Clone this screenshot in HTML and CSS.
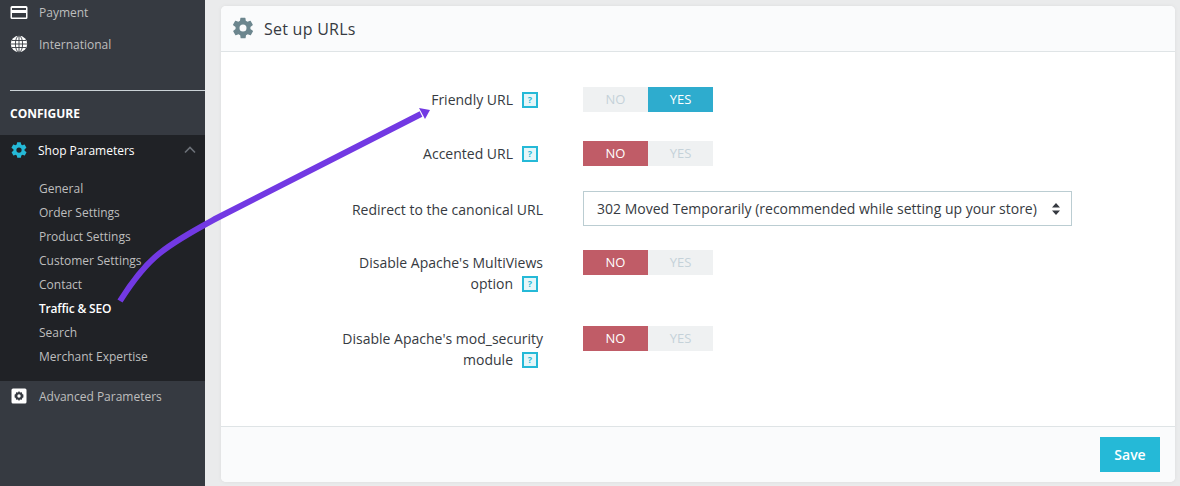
FILE: index.html
```html
<!DOCTYPE html>
<html lang="en">
<head>
<meta charset="utf-8">
<title>Set up URLs</title>
<link rel="stylesheet" href="styles.css">
</head>
<body>
<div class="app">
  <aside class="sidebar">
    <a class="nav-item"><svg class="nav-icon" viewBox="0 0 18 18"><path fill="#fff" d="M2 3h14a1.500 1.500 0 0 1 1.500 1.500v10A1.500 1.500 0 0 1 16 16H2a1.500 1.500 0 0 1-1.500-1.500v-10A1.500 1.500 0 0 1 2 3zm0 2v2h14V5zm0 5v4.500h14V10z"/></svg><span>Payment</span></a>
    <a class="nav-item"><svg class="nav-icon" viewBox="0 0 18 18"><circle cx="9" cy="9" r="8.200" fill="#fff"/><g fill="none" stroke="#363a41" stroke-width=".9"><ellipse cx="9" cy="9" rx="3.600" ry="8.200"/><path d="M9 .8v16.400M.8 9h16.400M2 5.500h14M2 12.500h14"/></g></svg><span>International</span></a>
    <div class="nav-rule"></div>
    <div class="nav-heading">CONFIGURE</div>
    <div class="nav-group">
      <a class="nav-parent"><svg class="nav-icon" viewBox="0 0 24 24"><path fill="#25b9d7" d="M19.400 13a7.600 7.600 0 0 0 0-2l2.200-1.700a.5.500 0 0 0 .1-.7l-2-3.600a.5.500 0 0 0-.6-.2l-2.600 1a7.500 7.500 0 0 0-1.700-1l-.4-2.700a.5.500 0 0 0-.5-.4h-4a.5.500 0 0 0-.5.400l-.4 2.700a7.500 7.500 0 0 0-1.700 1l-2.600-1a.5.500 0 0 0-.6.200l-2 3.600a.5.500 0 0 0 .1.700L4.600 11a7.600 7.600 0 0 0 0 2l-2.200 1.700a.5.500 0 0 0-.1.700l2 3.600a.5.500 0 0 0 .6.200l2.600-1a7.500 7.500 0 0 0 1.700 1l.4 2.700a.5.500 0 0 0 .5.400h4a.5.500 0 0 0 .5-.4l.4-2.700a7.500 7.500 0 0 0 1.700-1l2.600 1a.5.500 0 0 0 .6-.2l2-3.600a.5.500 0 0 0-.1-.7zM12 15.500a3.500 3.500 0 1 1 0-7 3.500 3.500 0 0 1 0 7z"/></svg><span>Shop Parameters</span><svg class="nav-caret" viewBox="0 0 12 8"><path fill="none" stroke="#6c7178" stroke-width="1.600" d="M1 6.500l5-5 5 5"/></svg></a>
      <ul class="subnav">
        <li>General</li>
        <li>Order Settings</li>
        <li>Product Settings</li>
        <li>Customer Settings</li>
        <li>Contact</li>
        <li class="subnav-current">Traffic &amp; SEO</li>
        <li>Search</li>
        <li>Merchant Expertise</li>
      </ul>
    </div>
    <a class="nav-item nav-item-last"><svg class="nav-icon" viewBox="0 0 18 18"><path fill="#fff" fill-rule="evenodd" d="M3 1.500h12A1.500 1.500 0 0 1 16.500 3v12a1.500 1.500 0 0 1-1.500 1.500H3A1.500 1.500 0 0 1 1.500 15V3A1.500 1.500 0 0 1 3 1.500zM9 4l1 1.400 1.800-.2.500 1.700 1.500 1-.8 1.100.8 1.100-1.500 1-.5 1.700-1.800-.2L9 14l-1-1.400-1.800.2-.5-1.700-1.500-1 .8-1.100-.8-1.100 1.500-1 .5-1.700 1.800.2zm0 3.300a1.700 1.700 0 1 0 0 3.400 1.700 1.700 0 0 0 0-3.400z"/></svg><span>Advanced Parameters</span></a>
  </aside>

  <main class="content">
    <section class="card">
      <header class="card-header">
        <svg class="card-icon" viewBox="0 0 24 24"><path fill="#6c868e" d="M19.400 13a7.600 7.600 0 0 0 0-2l2.200-1.700a.5.500 0 0 0 .1-.7l-2-3.600a.5.500 0 0 0-.6-.2l-2.600 1a7.500 7.500 0 0 0-1.700-1l-.4-2.700a.5.500 0 0 0-.5-.4h-4a.5.500 0 0 0-.5.400l-.4 2.700a7.500 7.500 0 0 0-1.700 1l-2.600-1a.5.500 0 0 0-.6.200l-2 3.600a.5.500 0 0 0 .1.700L4.600 11a7.600 7.600 0 0 0 0 2l-2.200 1.700a.5.500 0 0 0-.1.700l2 3.600a.5.500 0 0 0 .6.200l2.600-1a7.500 7.500 0 0 0 1.700 1l.4 2.700a.5.500 0 0 0 .5.400h4a.5.500 0 0 0 .5-.4l.4-2.700a7.500 7.500 0 0 0 1.700-1l2.600 1a.5.500 0 0 0 .6-.2l2-3.600a.5.500 0 0 0-.1-.7zM12 15.500a3.500 3.500 0 1 1 0-7 3.500 3.500 0 0 1 0 7z"/></svg>
        <h2>Set up URLs</h2>
      </header>
      <div class="card-body">
        <div class="form-row row-a">
          <label class="form-label">Friendly URL<span class="help">?</span></label>
          <div class="switch"><span class="switch-off">NO</span><span class="switch-yes">YES</span></div>
        </div>
        <div class="form-row row-b">
          <label class="form-label">Accented URL<span class="help">?</span></label>
          <div class="switch"><span class="switch-no">NO</span><span class="switch-off">YES</span></div>
        </div>
        <div class="form-row row-c">
          <label class="form-label form-label-select">Redirect to the canonical URL</label>
          <div class="select"><span>302 Moved Temporarily (recommended while setting up your store)</span><svg class="select-arrows" viewBox="0 0 10 12"><path fill="#363a41" d="M5 0l4 4.500H1zM5 12L1 7.500h8z"/></svg></div>
        </div>
        <div class="form-row row-d">
          <label class="form-label form-label-multi">Disable Apache's MultiViews<br>option<span class="help">?</span></label>
          <div class="switch"><span class="switch-no">NO</span><span class="switch-off">YES</span></div>
        </div>
        <div class="form-row">
          <label class="form-label form-label-multi">Disable Apache's mod_security<br>module<span class="help">?</span></label>
          <div class="switch"><span class="switch-no">NO</span><span class="switch-off">YES</span></div>
        </div>
      </div>
      <footer class="card-footer"><button class="btn-save" type="button">Save</button></footer>
    </section>
  </main>

  <svg class="annotation" viewBox="0 0 1180 486" width="1180" height="486">
    <path fill="none" stroke="#7239e3" stroke-width="6" d="M120 301C132 282 146 264 160 253C176 240 195 230 217 218L421 114"/>
    <path fill="#7239e3" d="M419 108L430 110L425 119Z"/>
  </svg>
</div>
</body>
</html>
```
FILE: styles.css
```css
* { box-sizing: border-box; }
html, body { margin: 0; padding: 0; height: 100%; overflow: hidden; }
body { font-family: "Open Sans", "Noto Sans", sans-serif; font-size: 12px; color: #363a41; background: #eaebec; }
.app { position: relative; display: flex; width: 1180px; height: 486px; overflow: hidden; }

.sidebar { width: 205px; flex: none; height: 486px; background: #363a41; color: #bebebe; overflow: hidden; }
.nav-item { display: flex; align-items: center; height: 32px; padding-left: 10px; color: #bebebe; }
.sidebar > .nav-item:first-child { margin-top: -4px; }
.nav-icon { width: 18px; height: 18px; flex: none; margin-right: 11px; }
.nav-rule { height: 1px; margin: 30px 0 0 10px; background: #cbd2d6; }
.nav-heading { height: 44px; padding-left: 10px; font-weight: 700; font-size: 12px; line-height: 45px; color: #fff; }
.nav-group { background: #202226; height: 246px; }
.nav-parent { display: flex; align-items: center; height: 30px; padding-left: 10px; color: #fff; }
.nav-parent .nav-icon { margin-right: 10px; }
.nav-caret { width: 12px; height: 8px; margin-left: auto; margin-right: 9px; }
.subnav { list-style: none; margin: 12px 0 0; padding: 0 0 0 39px; color: #bebebe; }
.subnav li { height: 24px; line-height: 24px; }
.subnav-current { color: #fff; font-weight: 600; letter-spacing: -.2px; }
.nav-item-last { height: 30px; }

.content { flex: 1; padding: 6px 5px 4px 16px; min-width: 0; }
.card { display: flex; flex-direction: column; height: 476px; background: #fff; border-radius: 5px; box-shadow: 0 0 4px rgba(0,0,0,.06); overflow: hidden; }
.card-header { display: flex; align-items: center; height: 46px; padding: 0 0 2px 10px; background: #fafbfc; border-bottom: 1px solid #dfe4e6; }
.card-icon { width: 24px; height: 24px; margin-right: 9px; }
.card-header h2 { margin: 0; padding-top: 2px; font-size: 16px; font-weight: 400; line-height: 22px; letter-spacing: .25px; color: #363a41; }
.card-body { flex: 1; padding-top: 35px; }
.form-row { display: flex; align-items: flex-start; }
.row-a { height: 54px; }
.row-b { height: 50px; }
.row-c { height: 59px; }
.row-d { height: 76px; }
.form-label { width: 322px; margin-right: 40px; padding-top: 2px; flex: none; text-align: right; font-size: 14px; line-height: 22px; color: #363a41; }
.form-label-select { padding-top: 8px; }
.form-label-multi { line-height: 21px; }
.help { display: inline-block; width: 16px; height: 16px; margin: 3px 5px 0 9px; border: 2px solid #25b9d7; background: #e5f6f9; color: #25b9d7; font-size: 9px; font-weight: 700; line-height: 12px; text-align: center; vertical-align: top; }
.switch { display: flex; width: 130px; height: 25px; font-size: 13px; font-weight: 500; line-height: 25px; text-align: center; }
.switch span { flex: 1; }
.switch-off { background: #eff1f2; color: #c5d2d9; }
.switch-yes { background: #2eacce; color: #fff; }
.switch-no { background: #c05c67; color: #fff; }
.select { display: flex; align-items: center; justify-content: space-between; width: 489px; height: 35px; padding: 0 10px 0 13px; border: 1px solid #bbcdd2; font-size: 14px; color: #363a41; background: #fff; }
.select-arrows { width: 10px; height: 12px; }
.card-footer { display: flex; justify-content: flex-end; align-items: center; height: 56px; padding: 0 15px 1px 0; background: #fafbfc; border-top: 1px solid #dfe4e6; }
.btn-save { width: 60px; height: 35px; border: 0; padding: 0; background: #25b9d7; color: #fff; font-family: inherit; font-size: 14px; font-weight: 600; }
.annotation { position: absolute; left: 0; top: 0; pointer-events: none; }
```
